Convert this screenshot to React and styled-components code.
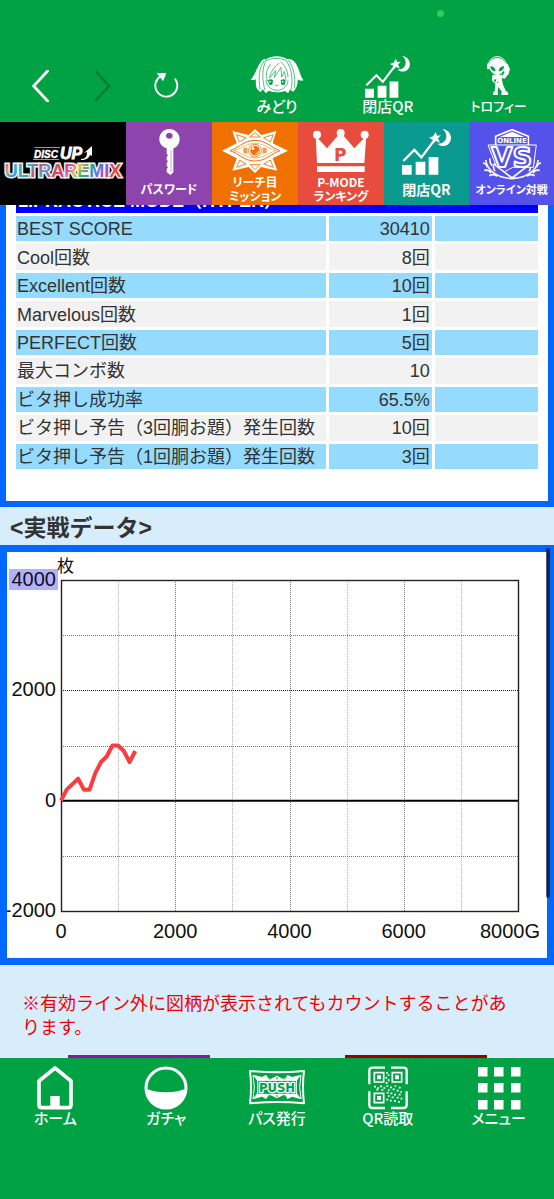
import React from "react";
import styled, { createGlobalStyle } from "styled-components";

const GREEN = "#00a244";
const BLUE = "#0068ff";
const JP = `"Noto Sans CJK JP", sans-serif`;

const GlobalStyle = createGlobalStyle`
  * { box-sizing: border-box; }
  body { margin: 0; background: ${GREEN}; }
  button { border: 0; padding: 0; background: none; color: inherit; font: inherit; cursor: pointer; }
  svg { display: block; }
`;

const Screen = styled.div`
  display: flex;
  flex-direction: column;
  height: 100vh;
  background: ${GREEN};
  color: #333;
  font-family: "Liberation Sans", ${JP};
`;

const TopBar = styled.header`
  position: relative;
  display: grid;
  grid-template-columns: repeat(5, 1fr);
  padding: 56px 0 8px;
  color: #fff;
`;

const StatusDot = styled.span`
  position: absolute;
  top: 10px;
  right: 110px;
  width: 7px;
  height: 7px;
  border-radius: 50%;
  background: #36c95c;
`;

const HistoryButtons = styled.div`
  display: flex;
  justify-content: space-between;
  padding: 14px 0 0 32px;
  height: 46px;
`;

const IconButton = styled.button`
  display: flex;
  align-items: ${(p) => (p.$middle ? "center" : "flex-start")};
  justify-content: center;
  height: ${(p) => (p.$middle ? "58px" : "32px")};
`;

const LabelledButton = styled.button`
  display: flex;
  flex-direction: column;
  align-items: center;
  font-family: ${JP};
  font-weight: 500;
  font-size: ${(p) => p.$size || 15}px;
  line-height: 16px;
  font-feature-settings: "palt";
  white-space: nowrap;
`;

const IconWell = styled.span`
  display: flex;
  justify-content: center;
  height: ${(p) => p.$height}px;
`;

const Banner = styled.nav`
  position: relative;
  z-index: 1;
  display: grid;
  grid-template-columns: 126fr repeat(3, 86fr) 85fr 85fr;
  height: 83px;
`;

const Logo = styled.div`
  display: flex;
  align-items: center;
  justify-content: center;
  background: #000;
`;

const Tile = styled.button`
  display: flex;
  flex-direction: column;
  align-items: center;
  padding-top: 7px;
  min-width: 0;
  background: ${(p) => p.$color};
  color: #fff;
`;

const TileLabel = styled.span`
  display: flex;
  align-items: center;
  justify-content: center;
  height: 28px;
  font-family: ${JP};
  font-weight: 700;
  font-size: ${(p) => p.$size || 12}px;
  line-height: 14px;
  font-feature-settings: "palt";
  white-space: pre;
`;

const Content = styled.main`
  flex: 1;
  min-height: 0;
  overflow: hidden;
  background: #d8edfb;
`;

const ScorePanel = styled.section`
  margin-top: -34px;
  padding: 8px 7px 29px;
  border: 6px solid ${BLUE};
  background: #fff;
`;

const ScoreTable = styled.table`
  width: 100%;
  height: 287px;
  table-layout: fixed;
  border-collapse: separate;
  border-spacing: 3px;
  font-size: 18px;
  line-height: 23px;
`;

const HeadCell = styled.th`
  padding: 2px 2px 0;
  background: #0000ff;
  color: #fff;
  text-align: left;
`;

const Row = styled.tr`
  background: ${(p) => (p.$tinted ? "#94dbff" : "#f2f2f2")};
`;

const NameCell = styled.th`
  padding: 2px 1px 0;
  font-weight: 400;
  text-align: left;
  white-space: nowrap;
`;

const ValueCell = styled.td`
  padding: 2px 2px 0;
  text-align: right;
`;

const Heading = styled.h2`
  margin: 0;
  padding: 4px 10px 0;
  font-size: 23px;
  line-height: 34px;
`;

const ChartPanel = styled.section`
  position: relative;
  border: 7px solid ${BLUE};
  background: #fff;
`;

const ScrollThumb = styled.span`
  position: absolute;
  top: -4px;
  right: -3px;
  width: 4px;
  height: 350px;
  border-radius: 2px;
  background: rgba(0, 10, 40, 0.68);
`;

const ChartSvg = styled.svg`
  width: 100%;
  height: auto;
  font-family: "Liberation Sans", ${JP};
  font-size: 20px;
`;

const Note = styled.p`
  margin: 27px 40px 15px 22px;
  color: #ee0000;
  font-size: 18px;
  line-height: 24px;
`;

const Actions = styled.div`
  display: grid;
  grid-template-columns: 1fr 1fr;
  justify-items: center;
`;

const ActionButton = styled.button`
  width: 142px;
  height: 40px;
  background: ${(p) => p.$color};
`;

const BottomBar = styled.nav`
  display: grid;
  grid-template-columns: repeat(5, 1fr);
  align-items: start;
  padding: 8px 0 73px;
  color: #fff;
`;

const BackIcon = () => (
  <svg width="17" height="32" viewBox="0 0 17 32" fill="none" stroke="#fff" strokeWidth="2.8" strokeLinecap="round">
    <path d="M15.6 1 1.6 16l14 15" />
  </svg>
);

const ForwardIcon = () => (
  <svg width="17" height="32" viewBox="0 0 17 32" fill="none" stroke="#0b7d2d" strokeWidth="2.6">
    <path d="M1.4 1 15 16 1.4 31" />
  </svg>
);

const ReloadIcon = () => (
  <svg width="26" height="26" viewBox="0 0 26 26" fill="none">
    <path d="M8 4A11 11 0 1 0 22.3 7.3" stroke="#fff" strokeWidth="1.9" strokeLinecap="round" />
    <path d="M4.4 1.6 12.8 1.4 10 8.6z" fill="#fff" stroke="#fff" strokeWidth="0.8" strokeLinejoin="round" />
  </svg>
);

const MidoriIcon = () => (
  <svg width="54" height="38" viewBox="0 0 162 114" strokeLinecap="round" strokeLinejoin="round">
    <path
      d="M30 22C20 34 18 54 2 71c10 2 12 2 16-2-2 18 0 32 14 39l6-8 10 12 8-8c16 6 34 7 49 1l9 7 6-11 10 6c10-10 14-22 13-37 7 6 12 4 18 3-12-14-12-34-24-51C128 10 120 8 112 10 96-2 66-3 50 9 42 8 34 12 30 22z"
      fill="#fff"
    />
    <g fill="none" stroke={GREEN} strokeWidth="2">
      <path d="M42 15C28 36 24 60 30 100M49 12C33 40 38 74 44 100M116 13c14 22 22 48 17 82M109 14c18 28 20 58 14 86" />
      <path d="M50 13c18-8 38-8 57 0M62 24C48 42 46 56 52 74M86 22C72 34 61 48 59 66l18-22-4 20 20-30 2 29 8-17 5 24M93 18c10 10 20 24 21 44" />
      <path d="M48 73c0 16 14 29 34 30 17-1 31-12 32-29M76 88q5 3 9 0" />
    </g>
    <path d="M54 73q9-6 15 0l-2 13H57zM92 73q9-6 15 0l-3 13H94z" fill={GREEN} />
    <g fill="#fff">
      <circle cx="60" cy="77" r="2.5" />
      <circle cx="98" cy="77" r="2.5" />
    </g>
  </svg>
);

const GraphIcon = ({ width, height }) => (
  <svg width={width} height={height} viewBox="0 0 150 138" fill="#fff">
    <path d="M0 108h29v29H0zM41 98h29v39H41zM80 84h29v53H80z" />
    <path d="M4 96 37 63l21 22 38-50" fill="none" stroke="#fff" strokeWidth="7" />
    <path d="m101 9 4 11 12-1-9 9 6 13-12-5-10 9v-13l-11-6 12-4z" />
    <path d="M121 0c15 1 26 13 26 27 0 20-23 33-41 17 18 2 27-10 27-22 0-9-4-17-12-22z" />
  </svg>
);

const TrophyIcon = () => (
  <svg width="24" height="40" viewBox="0 0 72 120">
    <path d="M4 31C4-7 57-8 58 30" fill="none" stroke="#fff" strokeWidth="3" />
    <path d="M31 6c17 0 25 11 24 25-1 13-12 25-24 26C18 56 7 44 6 31 5 17 14 6 31 6z" fill="#fff" />
    <path d="M54 22c7 0 12 5 11 11l4 4-4 17-13 15-8-5 9-16-4-4z" fill="#fff" />
    <rect x="0" y="22" width="8" height="18" rx="4" fill="#fff" />
    <path d="M10 31c9 0 15 5 16 15-9 0-16-5-16-15zM51 31c-9 0-15 5-16 15 9 0 16-5 16-15z" fill={GREEN} />
    <path d="M17 56h30l-2 15 3 15 9 20c7 1 8 7 6 11H43l1-11-10-13-2 12 1 12H18c-2-5 1-9 5-11l2-23-9-8c-3-6 0-12 1-19z" fill="#fff" />
    <path d="M20 72l8-3-3 11z" fill={GREEN} />
    <circle cx="32" cy="79" r="2" fill={GREEN} />
  </svg>
);

const LogoArt = () => (
  <svg width="124" height="40" viewBox="0 0 124 40" role="img" aria-label="DISC UP ULTRA REMIX">
    <defs>
      <linearGradient id="remix" x1="0" x2="1" y1="0" y2="0.12">
        <stop offset="0" stopColor="#e33a3a" />
        <stop offset="0.08" stopColor="#e8a04a" />
        <stop offset="0.14" stopColor="#3f9fe0" />
        <stop offset="0.24" stopColor="#2fb7c0" />
        <stop offset="0.32" stopColor="#e04a6a" />
        <stop offset="0.4" stopColor="#5aa0d8" />
        <stop offset="0.5" stopColor="#e84040" />
        <stop offset="0.58" stopColor="#d944b0" />
        <stop offset="0.66" stopColor="#e4c84a" />
        <stop offset="0.74" stopColor="#38b070" />
        <stop offset="0.82" stopColor="#3a86e0" />
        <stop offset="0.9" stopColor="#a050c8" />
        <stop offset="1" stopColor="#e84a30" />
      </linearGradient>
    </defs>
    <g fill="#fff" fontFamily="Liberation Sans, sans-serif" fontWeight="700" fontStyle="italic">
      <path d="M34 3h25v1H33zM32 15h26v1H32z" opacity="0.6" />
      <text x="33" y="14" fontSize="10" stroke="#fff" strokeWidth="0.4">DISC</text>
      <text x="59" y="15" fontSize="16" stroke="#fff" strokeWidth="0.8">UP</text>
    </g>
    <path d="M80 15c5 0 6-3 6-7l-3 1 8-7v10l-2-1c-1 3-4 5-9 5z" fill="#fff" />
    <text
      x="62"
      y="33"
      textAnchor="middle"
      fontFamily="Liberation Sans, sans-serif"
      fontSize="18"
      fontWeight="700"
      fill="url(#remix)"
      stroke="#f2f2f2"
      strokeWidth="3"
      paintOrder="stroke"
    >
      ULTRAREMIX
    </text>
  </svg>
);

const KeyIcon = () => (
  <svg width="21" height="46" viewBox="0 0 63 138">
    <path
      fillRule="evenodd"
      fill="#fff"
      d="M31 0c17 0 31 14 31 30 0 13-7 24-19 28v72l-8 8-12-8v-10l4-5-4-5v-8l4-5-4-5v-8l4-5-4-5V58C10 54 1 44 1 30 1 14 14 0 31 0zm0 11c-6 0-10 4-10 9s4 9 10 9 10-4 10-9-4-9-10-9z"
    />
    <path d="M36 64v66" stroke="#8e44ad" strokeWidth="1.5" />
  </svg>
);

const MissionIcon = () => (
  <svg width="66" height="44" viewBox="0 0 198 132" strokeLinejoin="round">
    <path d="M99 0 118 18l45-12-11 37 46 22-46 23 14 37-49-11-18 18-19-18-49 11 13-37L0 65l44-22L31 6l49 12z" fill="#fff" />
    <g fill="none" stroke="#f07000" strokeWidth="2.5">
      <path d="M99 11 83 24h32zM43 17l9 22 20-13zM154 17l-9 22-20-13zM44 115l9-22 19 12zM154 115l-9-22-20 12zM99 122l-15-15h30z" />
      <path d="M24 65c28-9 42-31 75-31s48 22 75 31c-27 9-42 31-75 31S52 74 24 65z" strokeWidth="3" />
      <path d="M36 65c25-8 39-22 63-22s38 14 63 22c-25 8-39 22-63 22S61 73 36 65z" strokeWidth="1.5" />
      <circle cx="99" cy="65" r="19" />
    </g>
    <circle cx="99" cy="65" r="14" fill="#f07000" />
    <circle cx="93" cy="59" r="4" fill="#fff" />
    <path d="M101 75q8-2 9-9" stroke="#fff" strokeWidth="3" fill="none" />
    <path d="M64 58l12-3v20l-12-4zM134 58l-12-3v20l12-4z" fill="#f07000" opacity="0.7" />
  </svg>
);

const CrownIcon = () => (
  <svg width="56" height="44" viewBox="0 0 168 132" fill="#fff">
    <circle cx="12" cy="17" r="12" />
    <circle cx="83" cy="12" r="12" />
    <circle cx="155" cy="17" r="12" />
    <path d="M8 20l34 38L78 16h10l36 42 36-38-6 82H12zM12 112h143v17H12z" />
    <text x="82" y="95" textAnchor="middle" fontFamily="DejaVu Sans, sans-serif" fontWeight="700" fontSize="51" fill="#e84c3d">
      P
    </text>
  </svg>
);

const VsIcon = () => (
  <svg width="60" height="52" viewBox="0 0 180 156" strokeLinejoin="round">
    <path d="M90 2l49 20v87l-49 38-49-38V22z" fill="#5552ea" stroke="#fff" strokeWidth="5" />
    <path d="M90 8l37 16H53z" fill="#fff" />
    <g fill="none" stroke="#fff" strokeWidth="5">
      <path d="M11 93c5 33 36 53 79 56 43-3 74-23 79-56" />
      <path d="M3 102q11 2 13 13M7 124q14-3 20 8M24 88q-2 14 7 22M37 104q-6 12 2 23M22 140q12-7 23 2M177 102q-11 2-13 13M173 124q-14-3-20 8M156 88q2 14-7 22M143 104q6 12-2 23M158 140q-12-7-23 2" />
    </g>
    <path d="M18 48h145l-9 67H92L68 128 43 112z" fill="#5552ea" stroke="#fff" strokeWidth="3" />
    <text
      x="89"
      y="113"
      textAnchor="middle"
      fontFamily="DejaVu Sans, sans-serif"
      fontWeight="700"
      fontSize="82"
      fill="#5552ea"
      stroke="#fff"
      strokeWidth="6"
    >
      VS
    </text>
    <text
      x="90"
      y="42"
      textAnchor="middle"
      fontFamily="DejaVu Sans, sans-serif"
      fontWeight="700"
      fontSize="21"
      fill="#fff"
      stroke="#5552ea"
      strokeWidth="6"
      paintOrder="stroke"
    >
      ONLINE
    </text>
  </svg>
);

const HomeIcon = () => (
  <svg width="36" height="44" viewBox="0 0 108 132">
    <path d="M54 6 6 45v72q0 8 8 8h80q8 0 8-8V45z" fill="none" stroke="#fff" strokeWidth="11" strokeLinejoin="round" />
    <path d="M40 90h28v35H40z" fill="#fff" />
  </svg>
);

const GachaIcon = () => (
  <svg width="44" height="44" viewBox="0 0 132 132">
    <circle cx="66" cy="66" r="60" fill="none" stroke="#fff" strokeWidth="9" />
    <path d="M6 68c36 14 84 14 120 0 0 36-26 60-60 60S6 104 6 68z" fill="#fff" />
  </svg>
);

const PushIcon = () => (
  <svg width="58" height="44" viewBox="0 0 174 132" strokeLinejoin="round">
    <path d="M6 15q81 8 162 0-6 48 0 97-81-8-162 0 6-49 0-97z" fill="none" stroke="#fff" strokeWidth="6" />
    <path d="M17 27l25 6 12-6 13 12 20-10 18 10 14-12 13 6 25-6-12 20H29zM17 99l25-7 12 7 12-12 21 10 20-10 12 12 13-7 25 7-12-20H29z" fill="#fff" />
    <path d="M15 27q8 36 0 72l16-18V44zM159 27q-8 36 0 72l-16-18V44z" fill="none" stroke="#fff" strokeWidth="3" />
    <path d="M58 31l8 10M116 31l-8 10M58 95l8-10M116 95l-8-10M87 33v8M87 93v-8" stroke={GREEN} strokeWidth="3" />
    <rect x="29" y="43" width="116" height="42" fill={GREEN} stroke="#fff" strokeWidth="3" />
    <text
      x="87"
      y="77"
      textAnchor="middle"
      fontFamily="DejaVu Sans, sans-serif"
      fontWeight="700"
      fontSize="35"
      fill={GREEN}
      stroke="#fff"
      strokeWidth="8"
      paintOrder="stroke"
    >
      PUSH
    </text>
  </svg>
);

const QrIcon = () => (
  <svg width="40" height="44" viewBox="0 0 120 132">
    <g fill="none" stroke="#fff" strokeWidth="7">
      <path d="M4 55V14q0-9 9-9h38M69 5h38q9 0 9 9v41M4 76v41q0 9 9 9h38M69 126h38q9 0 9-9V76" />
      <path d="M19 20h28v28H19zM73 20h28v28H73zM19 82h28v28H19z" strokeWidth="5" />
    </g>
    <path d="M27 28h12v12H27zM81 28h12v12H81zM27 90h12v12H27z" fill="#fff" />
    <g fill="none" stroke="#fff" strokeWidth="5">
      <path d="M57 18v5M62 25v5M55 32v6M62 40v6M56 48v6" />
      <path d="M18 62h6M28 66h5M36 61h6M46 66h6M25 71h6M40 72h6M55 60h6M66 64h6M80 60h5M92 65h6M60 72h5M74 70h6M86 74h6M97 78h5M56 80h6M67 82h6M78 86h6M92 86h6M60 90h5M71 94h6M86 95h6M98 98h5M55 101h6M66 104h5M78 105h6M90 108h6" />
    </g>
  </svg>
);

const MenuIcon = () => (
  <svg width="44" height="44" viewBox="0 0 44 44" fill="#fff">
    {[1, 17, 34].map((y) => [1, 17, 34].map((x) => <rect key={`${x}-${y}`} x={x} y={y} width="9.5" height="9.5" />))}
  </svg>
);

const scores = [
  ["BEST SCORE", "30410"],
  ["Cool回数", "8回"],
  ["Excellent回数", "10回"],
  ["Marvelous回数", "1回"],
  ["PERFECT回数", "5回"],
  ["最大コンボ数", "10"],
  ["ビタ押し成功率", "65.5%"],
  ["ビタ押し予告（3回胴お題）発生回数", "10回"],
  ["ビタ押し予告（1回胴お題）発生回数", "3回"],
];

const tiles = [
  { label: "パスワード", color: "#8e44ad", icon: <KeyIcon />, size: 12 },
  { label: "リーチ目\nミッション", color: "#f07000", icon: <MissionIcon />, size: 12 },
  { label: "P-MODE\nランキング", color: "#e84c3d", icon: <CrownIcon />, size: 12 },
  { label: "閉店QR", color: "#0a9a90", icon: <GraphIcon width="50" height="46" />, size: 14 },
  { label: "オンライン対戦", color: "#5552ea", icon: <VsIcon />, size: 11 },
];

const shortcuts = [
  { label: "みどり", icon: <MidoriIcon />, size: 15 },
  { label: "閉店QR", icon: <GraphIcon width="46" height="42" />, size: 15 },
  { label: "トロフィー", icon: <TrophyIcon />, size: 13 },
];

const tabs = [
  { label: "ホーム", icon: <HomeIcon /> },
  { label: "ガチャ", icon: <GachaIcon /> },
  { label: "パス発行", icon: <PushIcon /> },
  { label: "QR読取", icon: <QrIcon /> },
  { label: "メニュー", icon: <MenuIcon /> },
];

// Medal difference, sampled every 100 games.
const medals = [0, 200, 300, 400, 200, 200, 500, 700, 800, 1000, 1000, 900, 700, 900];

const plot = { left: 54, right: 511, top: 28, bottom: 359 };
const toX = (games) => plot.left + ((plot.right - plot.left) * games) / 8000;
const toY = (value) => plot.top + ((plot.bottom - plot.top) * (4000 - value)) / 6000;

const Chart = () => (
  <ChartSvg viewBox="0 0 540 406" role="img" aria-label="実戦データ">
    <rect x="2" y="17" width="49" height="21" fill="#b3b0ff" />
    <g stroke="#777" strokeWidth="1" strokeDasharray="1 1">
      {[1000, 2000, 3000, 4000, 5000, 6000, 7000].map((g) => (
        <line key={g} x1={Math.round(toX(g)) + 0.5} x2={Math.round(toX(g)) + 0.5} y1={plot.top} y2={plot.bottom} opacity={g % 2000 ? 0.6 : 1} />
      ))}
      {[3000, 2000, 1000, -1000].map((v) => (
        <line key={v} x1={plot.left} x2={plot.right} y1={Math.round(toY(v)) + 0.5} y2={Math.round(toY(v)) + 0.5} stroke={v === 2000 ? "#222" : "#777"} />
      ))}
    </g>
    <rect x="54.5" y="28.5" width="457" height="331" fill="none" stroke="#222" strokeWidth="1.4" />
    <line x1={plot.left} x2={plot.right} y1={toY(0)} y2={toY(0)} stroke="#000" strokeWidth="2" />
    <polyline
      points={medals.map((m, i) => `${toX(i * 100)},${toY(m)}`).join(" ")}
      fill="none"
      stroke="#f93e42"
      strokeWidth="4"
      strokeLinejoin="round"
    />
    <g fill="#111">
      <text x="50" y="20" fontSize="17">枚</text>
      {[4000, 2000, 0, -2000].map((v) => (
        <text key={v} x="49" y={Math.round(toY(v)) + 6} textAnchor="end">{v}</text>
      ))}
      {[0, 2000, 4000, 6000].map((g) => (
        <text key={g} x={toX(g)} y="386" textAnchor="middle">{g}</text>
      ))}
      <text x="533" y="386" textAnchor="end">8000G</text>
    </g>
  </ChartSvg>
);

export default function App() {
  return (
    <Screen>
      <GlobalStyle />
      <TopBar>
        <StatusDot />
        <HistoryButtons>
          <IconButton aria-label="戻る"><BackIcon /></IconButton>
          <IconButton aria-label="進む" disabled><ForwardIcon /></IconButton>
        </HistoryButtons>
        <IconButton aria-label="更新" $middle><ReloadIcon /></IconButton>
        {shortcuts.map((s) => (
          <LabelledButton key={s.label} $size={s.size}>
            <IconWell $height={42}>{s.icon}</IconWell>
            {s.label}
          </LabelledButton>
        ))}
      </TopBar>
      <Banner>
        <Logo><LogoArt /></Logo>
        {tiles.map((t) => (
          <Tile key={t.label} $color={t.color}>
            <IconWell $height={46}>{t.icon}</IconWell>
            <TileLabel $size={t.size}>{t.label}</TileLabel>
          </Tile>
        ))}
      </Banner>
      <Content>
        <ScorePanel>
          <ScoreTable>
            <colgroup>
              <col style={{ width: "60%" }} />
              <col style={{ width: "20%" }} />
              <col style={{ width: "20%" }} />
            </colgroup>
            <thead>
              <tr><HeadCell colSpan={3}>1.PRACTICE MODE（HYPER）</HeadCell></tr>
            </thead>
            <tbody>
              {scores.map(([name, value], i) => (
                <Row key={name} $tinted={i % 2 === 0}>
                  <NameCell scope="row">{name}</NameCell>
                  <ValueCell>{value}</ValueCell>
                  <ValueCell />
                </Row>
              ))}
            </tbody>
          </ScoreTable>
        </ScorePanel>
        <Heading>&lt;実戦データ&gt;</Heading>
        <ChartPanel>
          <Chart />
          <ScrollThumb />
        </ChartPanel>
        <Note>※有効ライン外に図柄が表示されてもカウントすることがあります。</Note>
        <Actions>
          <ActionButton $color="#8a1a9a" aria-label="前へ" />
          <ActionButton $color="#990000" aria-label="次へ" />
        </Actions>
      </Content>
      <BottomBar>
        {tabs.map((t) => (
          <LabelledButton key={t.label}>
            <IconWell $height={44}>{t.icon}</IconWell>
            {t.label}
          </LabelledButton>
        ))}
      </BottomBar>
    </Screen>
  );
}
